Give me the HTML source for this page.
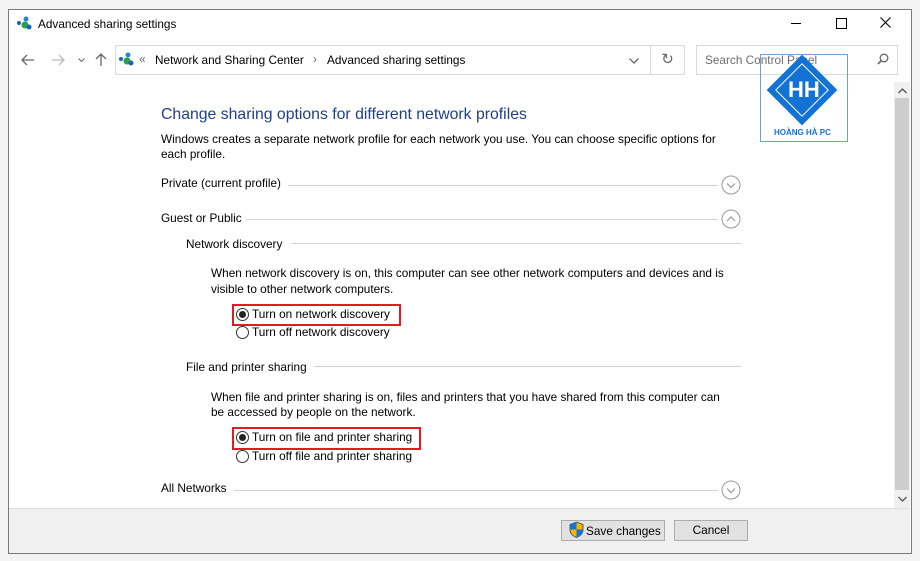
<!DOCTYPE html>
<html><head><style>
body{margin:0;width:920px;height:561px;background:#f3f3f3;position:relative;overflow:hidden;font-family:"Liberation Sans",sans-serif;font-size:11.8px;color:#000}
.a{position:absolute;white-space:nowrap}
.line{position:absolute;height:1px;background:#d0d0d0}
.radio{position:absolute;width:11px;height:11px;border:1px solid #333;border-radius:50%;background:#fff}
.radio.on::after{content:"";position:absolute;left:2px;top:2px;width:7px;height:7px;border-radius:50%;background:#222}
.red{position:absolute;border:2px solid #e01b24}
</style></head><body>
<div class="a" style="left:8px;top:9px;width:902px;height:543px;background:#fff;border:1px solid #7a7a7a"></div>
<svg class="a" style="left:16px;top:15px" width="18" height="16"><circle cx="3" cy="8" r="2" fill="#1565c0"/><circle cx="10" cy="4" r="2.5" fill="#1e88e5"/><circle cx="9" cy="10" r="3.5" fill="#2e9e4a"/><circle cx="13" cy="12" r="2.5" fill="#1565c0"/></svg>
<div class="a" style="left:38px;top:17px">Advanced sharing settings</div>
<div class="a" style="left:791px;top:23px;width:10px;height:1px;background:#000"></div>
<div class="a" style="left:836px;top:18px;width:9px;height:9px;border:1px solid #000"></div>
<svg class="a" style="left:880px;top:17px" width="11" height="11"><path d="M0.5 0.5 L10.5 10.5 M10.5 0.5 L0.5 10.5" stroke="#000" stroke-width="1.1"/></svg>
<svg class="a" style="left:21px;top:54px" width="14" height="12"><path d="M1 6 H13 M6 1 L1 6 L6 11" stroke="#666" stroke-width="1.3" fill="none"/></svg>
<svg class="a" style="left:51px;top:54px" width="14" height="12"><path d="M1 6 H13 M8 1 L13 6 L8 11" stroke="#bbb" stroke-width="1.3" fill="none"/></svg>
<svg class="a" style="left:78px;top:58px" width="7" height="4"><path d="M0.5 0.5 L3.5 3.5 L6.5 0.5" stroke="#666" fill="none"/></svg>
<svg class="a" style="left:95px;top:53px" width="12" height="14"><path d="M6 13 V1 M1 6 L6 1 L11 6" stroke="#666" stroke-width="1.3" fill="none"/></svg>
<div class="a" style="left:115px;top:45px;width:534px;height:28px;border:1px solid #d9d9d9"></div>
<div class="a" style="left:650px;top:45px;width:33px;height:28px;border:1px solid #d9d9d9;border-left:1px solid #d9d9d9;text-align:center;line-height:28px;font-size:15px;color:#666">↻</div>
<svg class="a" style="left:118px;top:51px" width="18" height="16"><circle cx="3" cy="8" r="2" fill="#1565c0"/><circle cx="10" cy="4" r="2.5" fill="#1e88e5"/><circle cx="9" cy="10" r="3.5" fill="#2e9e4a"/><circle cx="13" cy="12" r="2.5" fill="#1565c0"/></svg>
<div class="a" style="left:139px;top:52px;color:#666">«</div>
<div class="a" style="left:155px;top:53px">Network and Sharing Center</div>
<div class="a" style="left:313px;top:52px;color:#666">›</div>
<div class="a" style="left:327px;top:53px">Advanced sharing settings</div>
<svg class="a" style="left:629px;top:58px" width="10" height="6"><path d="M0.5 0.5 L5 5 L9.5 0.5" stroke="#555" stroke-width="1.2" fill="none"/></svg>
<div class="a" style="left:696px;top:45px;width:200px;height:28px;border:1px solid #d9d9d9"></div>
<div class="a" style="left:705px;top:53px;color:#6d6d6d">Search Control Panel</div>
<svg class="a" style="left:877px;top:53px" width="12" height="12"><circle cx="7" cy="5" r="3.8" stroke="#666" stroke-width="1.3" fill="none"/><path d="M4.3 7.7 L1 11" stroke="#666" stroke-width="1.6"/></svg>
<div class="a" style="left:760px;top:54px;width:86px;height:86px;border:1px solid #6aa0e0"></div>
<div class="a" style="left:777px;top:65px;width:50px;height:50px;background:#1372d6;transform:rotate(45deg)"></div>
<div class="a" style="left:783px;top:71px;width:36px;height:36px;border:1.5px solid #fff;transform:rotate(45deg)"></div>
<div class="a" style="left:788px;top:77px;color:#fff;font-weight:bold;font-size:22px">HH</div>
<div class="a" style="left:774px;top:128px;color:#1372d6;font-weight:bold;font-size:8px">HOÀNG HÀ PC</div>
<div class="a" style="left:894px;top:82px;width:16px;height:426px;background:#f0f0f0"></div>
<div class="a" style="left:895px;top:98px;width:14px;height:392px;background:#cdcdcd"></div>
<svg class="a" style="left:898px;top:88px" width="9" height="6"><path d="M0.5 5 L4.5 1 L8.5 5" stroke="#555" stroke-width="1.3" fill="none"/></svg>
<svg class="a" style="left:898px;top:496px" width="9" height="6"><path d="M0.5 1 L4.5 5 L8.5 1" stroke="#555" stroke-width="1.3" fill="none"/></svg>
<div class="a" style="left:161px;top:106px;font-size:15.8px;color:#1e3f8a">Change sharing options for different network profiles</div>
<div class="a" style="left:161px;top:132px">Windows creates a separate network profile for each network you use. You can choose specific options for</div>
<div class="a" style="left:161px;top:147px">each profile.</div>
<div class="a" style="left:161px;top:176px">Private (current profile)</div>
<div class="line" style="left:288px;top:185px;width:430px"></div>
<svg class="a" style="left:721px;top:175px" width="20" height="20"><circle cx="10" cy="10" r="9" stroke="#999" fill="#fff"/><path d="M6 8.5 L10 12.5 L14 8.5" stroke="#999" stroke-width="1.2" fill="none"/></svg>
<div class="a" style="left:161px;top:211px">Guest or Public</div>
<div class="line" style="left:246px;top:219px;width:472px"></div>
<svg class="a" style="left:721px;top:209px" width="20" height="20"><circle cx="10" cy="10" r="9" stroke="#999" fill="#fff"/><path d="M6 12 L10 8 L14 12" stroke="#999" stroke-width="1.2" fill="none"/></svg>
<div class="a" style="left:186px;top:237px">Network discovery</div>
<div class="line" style="left:292px;top:243px;width:449px"></div>
<div class="a" style="left:211px;top:266px">When network discovery is on, this computer can see other network computers and devices and is</div>
<div class="a" style="left:211px;top:282px">visible to other network computers.</div>
<div class="red" style="left:232px;top:304px;width:165px;height:18px"></div>
<div class="radio on" style="left:236px;top:308px"></div>
<div class="a" style="left:252px;top:307px">Turn on network discovery</div>
<div class="radio" style="left:236px;top:326px"></div>
<div class="a" style="left:252px;top:325px">Turn off network discovery</div>
<div class="a" style="left:186px;top:360px">File and printer sharing</div>
<div class="line" style="left:314px;top:366px;width:427px"></div>
<div class="a" style="left:211px;top:390px">When file and printer sharing is on, files and printers that you have shared from this computer can</div>
<div class="a" style="left:211px;top:405px">be accessed by people on the network.</div>
<div class="red" style="left:232px;top:427px;width:185px;height:19px"></div>
<div class="radio on" style="left:236px;top:431px"></div>
<div class="a" style="left:252px;top:430px">Turn on file and printer sharing</div>
<div class="radio" style="left:236px;top:450px"></div>
<div class="a" style="left:252px;top:449px">Turn off file and printer sharing</div>
<div class="a" style="left:161px;top:481px">All Networks</div>
<div class="line" style="left:234px;top:490px;width:484px"></div>
<svg class="a" style="left:721px;top:480px" width="20" height="20"><circle cx="10" cy="10" r="9" stroke="#999" fill="#fff"/><path d="M6 8.5 L10 12.5 L14 8.5" stroke="#999" stroke-width="1.2" fill="none"/></svg>
<div class="a" style="left:9px;top:508px;width:901px;height:44px;background:#f0f0f0;border-top:1px solid #dfdfdf"></div>
<div class="a" style="left:561px;top:520px;width:102px;height:19px;border:1px solid #adadad;background:#e1e1e1"></div>
<svg class="a" style="left:569px;top:521px" width="15" height="17"><path d="M7.5 1 L14 3.5 V9 C14 13 10.5 15.5 7.5 16.5 C4.5 15.5 1 13 1 9 V3.5 Z" fill="#f5b400" stroke="#345" stroke-width="0.8"/><path d="M7.5 1 V8.5 H1 V3.5 Z M7.5 8.5 H14 V9 C14 13 10.5 15.5 7.5 16.5 Z" fill="#1a73d0"/></svg>
<div class="a" style="left:586px;top:524px">Save changes</div>
<div class="a" style="left:674px;top:520px;width:72px;height:19px;border:1px solid #adadad;background:#e1e1e1;text-align:center;line-height:19px">Cancel</div>
</body></html>
